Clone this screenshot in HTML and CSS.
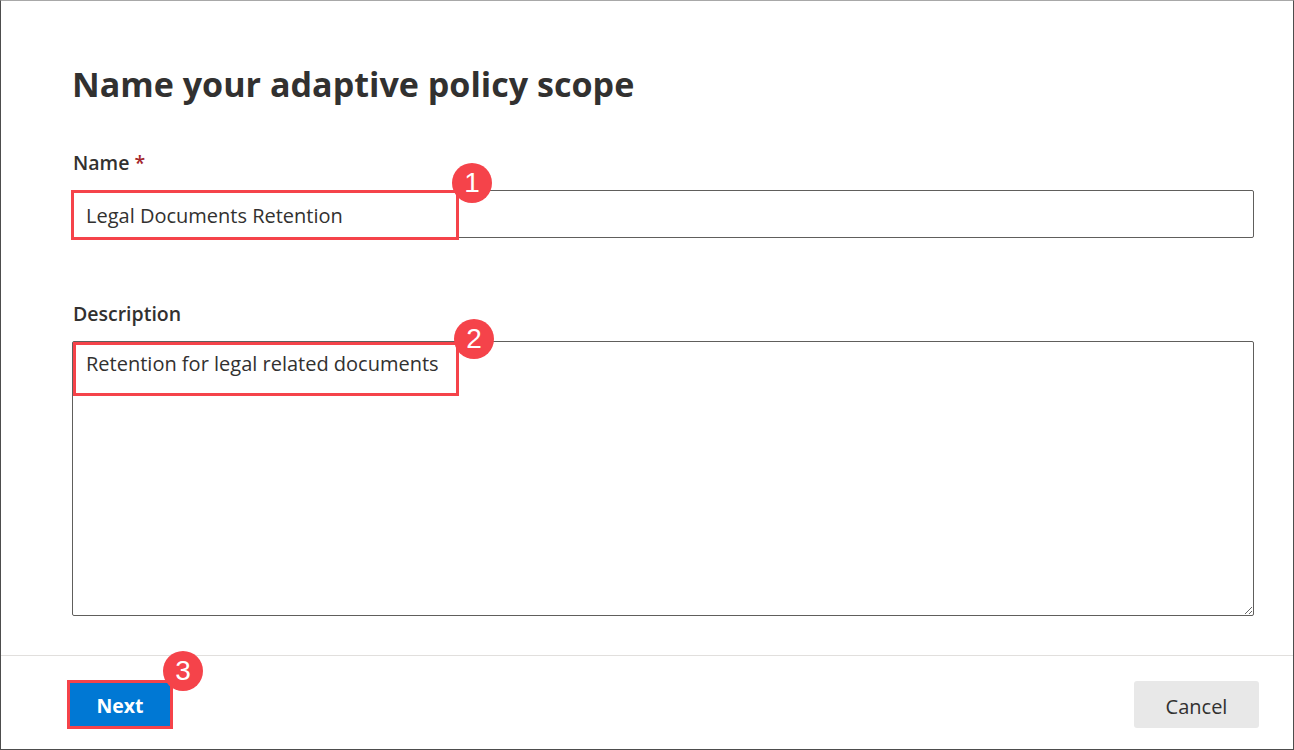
FILE: index.html
```html
<!DOCTYPE html>
<html>
<head>
<meta charset="utf-8">
<link rel="stylesheet" href="styles.css">
</head>
<body>
<div class="frame">
  <div class="content">
    <h1 class="title">Name your adaptive policy scope</h1>
    <div class="label label-name">Name <span class="req">*</span></div>
    <div class="field field-gap">
      <div class="input">Legal Documents Retention</div>
      <div class="hl hl-1"></div>
      <div class="badge badge-1">1</div>
    </div>
    <div class="label label-desc">Description</div>
    <div class="field field-gap">
      <div class="textarea">Retention for legal related documents</div>
      <div class="hl hl-2"></div>
      <div class="badge badge-2">2</div>
    </div>
  </div>
  <div class="footer">
    <div class="field">
      <button class="btn btn-primary">Next</button>
      <div class="hl hl-3"></div>
      <div class="badge badge-3">3</div>
    </div>
    <button class="btn btn-default">Cancel</button>
  </div>
</div>
</body>
</html>
```

FILE: styles.css
```css
* { box-sizing: border-box; }
html, body { margin: 0; padding: 0; background: #fff; }
body { font-family: "Open Sans", "Noto Sans", "Liberation Sans", sans-serif; color: #323130; }

.frame {
  width: 1294px;
  height: 750px;
  border: 1px solid #4d4d4d;
  border-top-color: #a8a8a8;
  display: flex;
  flex-direction: column;
}

.content {
  flex: 1;
  padding: 63px 39px 0 71px;
}

.title {
  margin: 0;
  font-size: 34.1px;
  line-height: 40px;
  font-weight: 700;
  color: #323130;
}

.label {
  font-size: 19.5px;
  line-height: 24px;
  font-weight: 600;
  color: #323130;
  padding-left: 1px;
}
.label-name { margin-top: 47px; }
.label-desc { margin-top: 64px; }
.req { color: #a4262c; font-weight: 600; }

.field { position: relative; }
.field-gap { margin-top: 15px; }

.input {
  height: 48px;
  border: 1px solid #605e5c;
  border-radius: 2px;
  padding: 3px 12px 0 13px;
  font-size: 20px;
  line-height: 44px;
  color: #323130;
}

.textarea {
  height: 275px;
  border: 1px solid #605e5c;
  border-radius: 2px;
  padding: 9px 12px 0 13px;
  font-size: 20px;
  line-height: 26px;
  color: #323130;
  resize: both;
  overflow: auto;
}

.hl {
  position: absolute;
  border: 3px solid #f5434a;
  pointer-events: none;
}
.hl-1 { left: -1px; top: 0; width: 388px; height: 50px; }
.hl-2 { left: 1px; top: 1px; width: 386px; height: 54px; }
.hl-3 { left: -1px; top: -1px; width: 106px; height: 49px; }

.badge {
  position: absolute;
  width: 40px;
  height: 40px;
  border-radius: 50%;
  background: #f5434a;
  color: #fff;
  font-family: "Liberation Sans", Arial, sans-serif;
  font-size: 28px;
  line-height: 40px;
  text-align: center;
}
.badge-1 { left: 380px; top: -27px; }
.badge-2 { left: 382px; top: -22px; }
.badge-3 { left: 95px; top: -30px; }

.footer {
  height: 94px;
  border-top: 1px solid #e1dfdd;
  padding: 25px 34px 0 67px;
  display: flex;
  justify-content: space-between;
  align-items: flex-start;
}

.btn {
  font-family: "Open Sans", "Noto Sans", "Liberation Sans", sans-serif;
  font-size: 19.5px;
  font-weight: 700;
  border: none;
  border-radius: 3px;
  height: 47px;
  padding: 2px 0 0;
  margin: 0;
  cursor: pointer;
  display: block;
}
.btn-primary {
  width: 104px;
  background: #0078d4;
  color: #fff;
  border-radius: 0;
}
.btn-default {
  width: 125px;
  background: #e8e8e8;
  color: #323130;
  font-size: 20px;
  font-weight: 400;
  padding-top: 3px;
}
```
